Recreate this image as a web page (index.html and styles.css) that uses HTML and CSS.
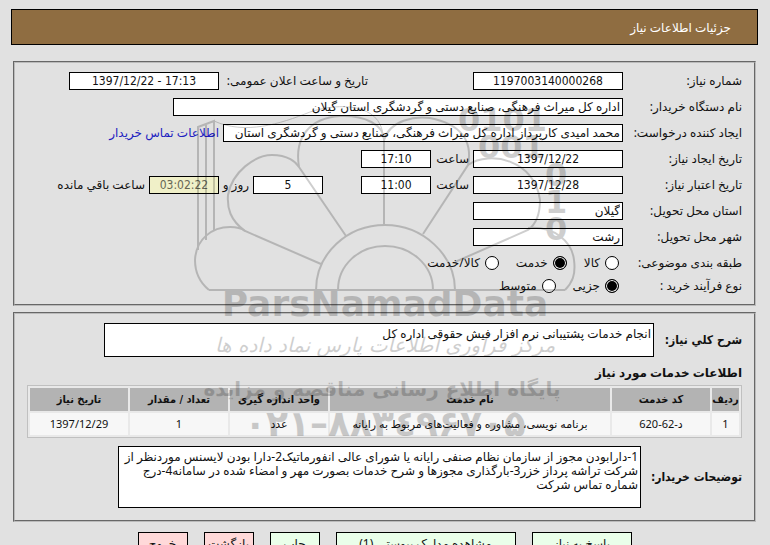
FILE: index.html
```html
<!DOCTYPE html>
<html lang="fa" dir="rtl">
<head>
<meta charset="utf-8">
<title>جزئیات اطلاعات نیاز</title>
<link rel="stylesheet" href="styles.css">
</head>
<body>
<header class="title-bar"><h1>جزئیات اطلاعات نیاز</h1></header>
<main>
  <form class="panels">
    <section class="panel need">
      <div class="row">
        <label class="name" for="no">شماره نیاز:</label>
        <input class="box mid" id="no" value="1197003140000268" readonly>
        <label class="announce" for="pub">تاریخ و ساعت اعلان عمومی:</label>
        <input class="box mid" id="pub" dir="ltr" value="1397/12/22 - 17:13" readonly>
      </div>
      <div class="row">
        <label class="name" for="org">نام دستگاه خریدار:</label>
        <input class="box widest" id="org" value="اداره کل میراث فرهنگی، صنایع دستی و گردشگری استان گیلان" readonly>
      </div>
      <div class="row">
        <label class="name" for="by">ایجاد کننده درخواست:</label>
        <input class="box wide" id="by" value="محمد امیدی کارپرداز اداره کل میراث فرهنگی، صنایع دستی و گردشگری استان" readonly>
        <a href="#contact">اطلاعات تماس خریدار</a>
      </div>
      <div class="row">
        <label class="name" for="made">تاریخ ایجاد نیاز:</label>
        <input class="box mid" id="made" value="1397/12/22" readonly>
        <label class="hour" for="made-h">ساعت</label>
        <input class="box small" id="made-h" value="17:10" readonly>
      </div>
      <div class="row">
        <label class="name" for="exp">تاریخ اعتبار نیاز:</label>
        <input class="box mid" id="exp" value="1397/12/28" readonly>
        <label class="hour" for="exp-h">ساعت</label>
        <input class="box small" id="exp-h" value="11:00" readonly>
        <input class="box small days" id="days" value="5" readonly>
        <label class="and" for="days">روز و</label>
        <input class="box small timer" id="left" value="03:02:22" readonly>
        <label for="left">ساعت باقي مانده</label>
      </div>
      <div class="row">
        <label class="name" for="prov">استان محل تحویل:</label>
        <input class="box mid start" id="prov" value="گیلان" readonly>
      </div>
      <div class="row">
        <label class="name" for="city">شهر محل تحویل:</label>
        <input class="box mid start" id="city" value="رشت" readonly>
      </div>
      <div class="row" role="radiogroup" aria-labelledby="kind">
        <span class="name" id="kind">طبقه بندی موضوعی:</span>
        <label class="choice"><input type="radio" name="kind">کالا</label>
        <label class="choice"><input type="radio" name="kind" checked>خدمت</label>
        <label class="choice"><input type="radio" name="kind">کالا/خدمت</label>
      </div>
      <div class="row tight" role="radiogroup" aria-labelledby="process">
        <span class="name" id="process">نوع فرآیند خرید :</span>
        <label class="choice"><input type="radio" name="process" checked>جزیی</label>
        <label class="choice"><input type="radio" name="process">متوسط</label>
      </div>
    </section>
    <section class="panel services">
      <div class="note">
        <label for="desc">شرح کلي نیاز:</label>
        <textarea class="desc" id="desc" readonly>انجام خدمات پشتیبانی نرم افزار فیش حقوقی اداره کل</textarea>
      </div>
      <h2>اطلاعات خدمات مورد نیاز</h2>
      <table>
        <thead>
          <tr><th class="c-no">ردیف</th><th class="c-mid">کد خدمت</th><th>نام خدمت</th><th class="c-mid">واحد اندازه گیری</th><th class="c-mid">تعداد / مقدار</th><th class="c-mid">تاریخ نیاز</th></tr>
        </thead>
        <tbody>
          <tr><td>1</td><td>د-62-620</td><td>برنامه نویسی، مشاوره و فعالیت‌های مربوط به رایانه</td><td>عدد</td><td>1</td><td>1397/12/29</td></tr>
        </tbody>
      </table>
      <div class="note">
        <label for="remarks">توضیحات خریدار:</label>
        <textarea class="remarks" id="remarks" readonly>1-دارابودن مجوز از سازمان نظام صنفی رایانه یا شورای عالی انفورماتیک2-دارا بودن لایسنس موردنظر از
شرکت تراشه پرداز خزر3-بارگذاری مجوزها و شرح خدمات بصورت مهر و امضاء شده در سامانه4-درج
شماره تماس شرکت</textarea>
      </div>
    </section>
    <div class="actions">
      <button class="go w100" type="button">پاسخ به نیاز</button>
      <button class="go w180" type="button">مشاهده مدارک پیوستی (1)</button>
      <button class="go w50" type="button">چاپ</button>
      <button class="stop w50" type="button">بازگشت</button>
      <button class="stop w50" type="button">خروج</button>
    </div>
  </form>
</main>
<svg class="watermark" width="390" height="370" viewBox="0 0 390 370" direction="ltr" aria-hidden="true">
  <g fill="none" stroke="currentColor" stroke-width="2">
    <path d="M19 200H375M126 200C126 164 157 135 195 135S265 165 265 200M148 200C148 175 169 156 195 156S243 175 243 200" />
    <path d="M19 200C8 191 5 181 5 170C6 149 22 137 40 137Q50 137 55 141L131 174" />
    <path d="M55 141C40 130 37 118 38 105C42 82 65 65 82 65C98 65 106 72 109 77L156 146" />
    <path d="M109 77C104 47 120 28 150 26C175 25 194 35 194 50V135" />
    <path d="M194 50C200 30 225 26 240 28C270 34 283 50 278 75L233 144" />
    <path d="M278 75C300 60 345 70 350 110C350 125 345 135 338 140L265 172" />
    <path d="M338 138C365 136 382 152 384 170C386 185 382 193 375 200" />
    <path d="M8 160V37L24 31V140M16 150V34" />
    <path stroke-width="1" d="M24 31C55 45 90 34 120 22C150 12 190 14 193 45" />
  </g>
  <g class="bits" fill="currentColor">
    <text x="268" y="41">0101</text>
    <text x="288" y="68">001</text>
    <text x="355" y="96">0</text>
    <text x="355" y="123">1</text>
    <text x="355" y="150">0</text>
  </g>
  <g fill="currentColor" text-anchor="middle">
    <text class="brand" x="195" y="226">ParsNamadData</text>
    <text class="script" x="195" y="262">مرکز فرآوری اطلاعات پارس نماد داده ها</text>
    <text class="tag" x="192" y="306">پایگاه اطلاع رسانی مناقصه و مزایده</text>
    <text class="phone" x="195" y="346">۰۲۱–۸۸۳٤۹۶۷۰۵</text>
  </g>
</svg>
</body>
</html>
```
FILE: styles.css
```css
* { box-sizing: border-box; }
body {
  margin: 0;
  padding: 9px 12px 8px 11px;
  position: relative;
  background: #e1e1e1;
  color: #111;
  font: 12px/18px "Noto Sans", "DejaVu Sans", sans-serif;
}
h1, h2 { margin: 0; }
input, textarea, button { font: inherit; color: inherit; margin: 0; }
.title-bar {
  border: 1px solid #000;
  background: #8f6d41;
  padding: 9px 26px 7px;
}
.title-bar h1 { font-size: 12px; font-weight: 400; line-height: 18px; color: #fff; }
.panels { margin: 16px 2px 0; }
.panel { border: 2px groove #bbb; padding: 9px 12px; margin-bottom: 6px; }
.services { padding-bottom: 12px; }
.row { display: flex; align-items: center; gap: 4px; height: 18px; margin-bottom: 8px; white-space: nowrap; }
.row.tight { margin-top: -3px; margin-bottom: 0; }
.name { width: 115px; }
.box {
  height: 18px;
  border: 1px solid #000;
  background: #fff;
  padding: 0 2px;
  text-align: center;
  border-radius: 0;
}
.mid, .small { font-family: "DejaVu Sans Condensed", "DejaVu Sans", sans-serif; }
.mid { width: 150px; }
.small { width: 70px; }
.wide { width: 400px; text-align: start; }
.widest { width: 450px; text-align: start; }
.start { text-align: start; font-family: inherit; }
.announce { width: 145px; margin-right: 101px; }
.hour { width: 34px; }
.and { width: 26px; }
.days { margin-right: 34px; }
.timer { background: #f0f0c8; color: #665; }
a { color: #2020c0; text-decoration: none; }
.choice { display: flex; align-items: center; gap: 5px; margin-left: 9px; }
.choice input {
  appearance: none;
  width: 14px;
  height: 14px;
  margin-right: 4px;
  border: 1px solid #000;
  border-radius: 50%;
  background: #fff;
}
.choice input:checked { background: #000; box-shadow: inset 0 0 0 1px #fff; }
.note { display: flex; align-items: center; gap: 6px; }
.note label {
  font-family: "DejaVu Sans Condensed", "DejaVu Sans", sans-serif;
  font-weight: 700;
  white-space: nowrap;
}
.note label[for="desc"] { width: 82px; }
.note label[for="remarks"] { width: 95px; }
textarea {
  display: block;
  resize: none;
  overflow: hidden;
  border: 1px solid #000;
  background: #fff;
  padding: 3px 2px;
  line-height: 14px;
  border-radius: 0;
}
.desc { width: 550px; height: 34px; }
.remarks { width: 523px; height: 62px; }
h2 { font-size: 12px; line-height: 18px; margin: 7px 0 3px; }
table {
  width: 100%;
  table-layout: fixed;
  border: 1px solid #c0c0c0;
  border-collapse: separate;
  border-spacing: 2px;
  background: #e9e9e9;
  margin-bottom: 8px;
  font-size: 11px;
  line-height: 18px;
}
th, td { padding: 0; text-align: center; white-space: nowrap; }
th {
  height: 23px;
  background: #b3b3b3;
  font-family: "DejaVu Sans Condensed", "DejaVu Sans", sans-serif;
}
td { height: 22px; background: #f7f7f7; }
.c-no { width: 27px; }
.c-mid { width: 98px; }
.actions { display: flex; justify-content: center; gap: 16px; margin-top: 10px; }
button { height: 24px; padding: 0; border: 1px solid #000; white-space: nowrap; border-radius: 0; }
.go { background: #eaffea; }
.stop { background: #ffd9d9; }
.w50 { width: 50px; }
.w100 { width: 100px; }
.w180 { width: 180px; }
.watermark {
  position: absolute;
  top: 90px;
  left: calc(50% - 195px);
  color: #000;
  opacity: .19;
  pointer-events: none;
}
.bits { font: 700 32px "DejaVu Sans", sans-serif; }
.brand { font: 700 36px "DejaVu Sans", sans-serif; }
.script { font: italic 20px "DejaVu Sans", sans-serif; }
.tag { font: 700 20px "DejaVu Sans", sans-serif; }
.phone { font: 700 36px "DejaVu Sans", sans-serif; }
```
